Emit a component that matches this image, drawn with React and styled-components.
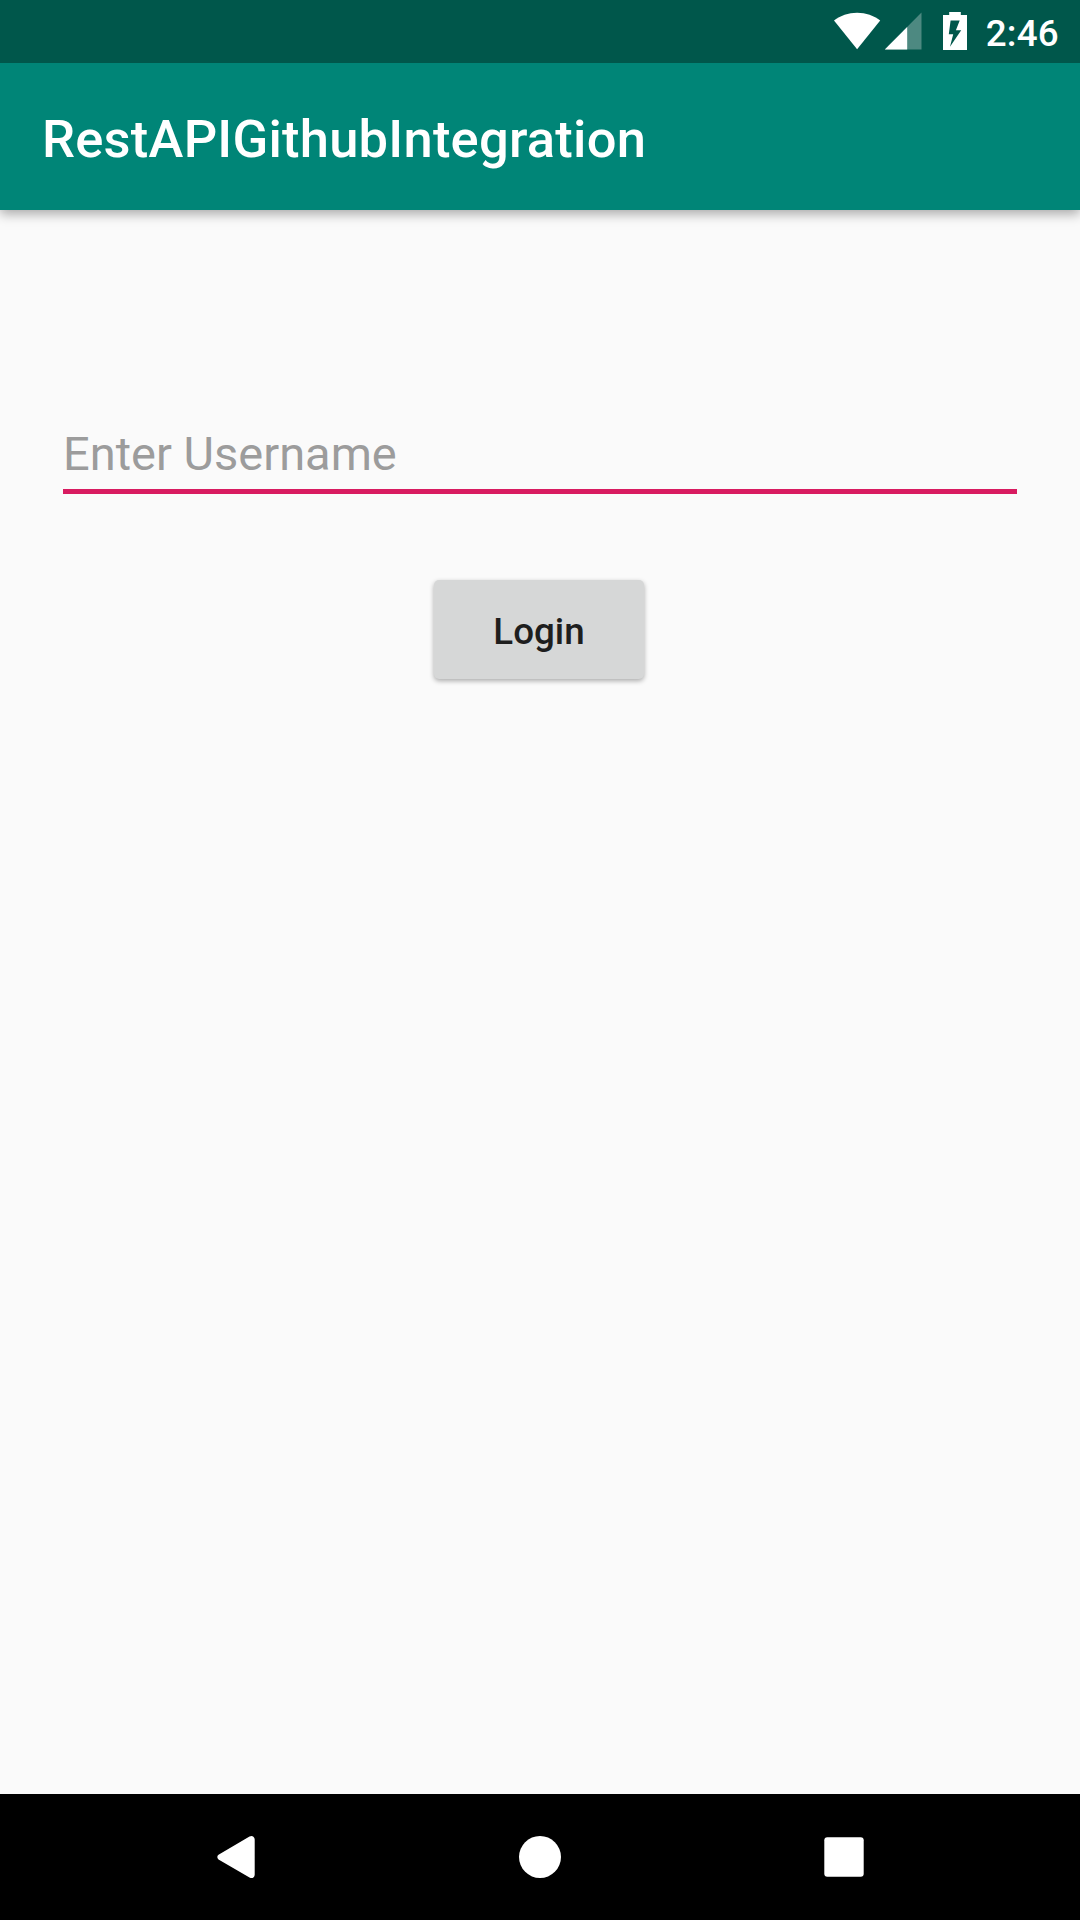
import React from "react";
import styled, { createGlobalStyle } from "styled-components";

const GlobalStyle = createGlobalStyle`
  * { box-sizing: border-box; }
  body {
    margin: 0;
    background: #fafafa;
    font-family: Roboto, "Liberation Sans", sans-serif;
  }
`;

const Screen = styled.div`
  display: flex;
  flex-direction: column;
  width: 1080px;
  height: 1920px;
  overflow: hidden;
  background: #fafafa;
`;

const StatusBar = styled.header`
  flex: none;
  display: flex;
  justify-content: flex-end;
  align-items: flex-start;
  z-index: 1;
  height: 63px;
  padding: 12px 21px 0 0;
  background: #00574b;
  color: #fff;
`;

const StatusIcon = styled.svg`
  display: block;
  flex: none;
  width: ${(p) => p.$width}px;
  height: 38px;
  margin-right: ${(p) => p.$gap}px;
`;

const Clock = styled.time`
  font-size: 36.75px;
  font-weight: 500;
  line-height: 43px;
  letter-spacing: 0.25px;
`;

const AppBar = styled.div`
  flex: none;
  display: flex;
  align-items: center;
  height: 147px;
  padding: 4px 42px 0;
  background: #008577;
  box-shadow: 0 4px 11px rgba(0, 0, 0, 0.33);
`;

const Title = styled.h1`
  margin: 0;
  color: #fff;
  font-size: 52.5px;
  font-weight: 500;
  line-height: 62px;
  letter-spacing: 0.23px;
`;

const Content = styled.main`
  flex: 1;
  display: flex;
  flex-direction: column;
  align-items: center;
  padding: 212px 63px 0;
`;

const Field = styled.div`
  width: 100%;
  height: 72px;
  border-bottom: 5px solid #d81b60;
  color: #9c9c9c;
  font-size: 47px;
  line-height: 64px;
`;

const Button = styled.button`
  width: 210px;
  height: 99px;
  margin: 86px 2px 0 0;
  padding: 4px 0 0;
  border: 0;
  border-radius: 5px;
  background: #d6d7d7;
  box-shadow: 0 2px 5px rgba(0, 0, 0, 0.32);
  color: #1e1e1e;
  font: 500 36.75px Roboto, "Liberation Sans", sans-serif;
`;

const NavBar = styled.nav`
  flex: none;
  display: flex;
  justify-content: center;
  align-items: center;
  gap: 262px;
  height: 126px;
  background: #000;
`;

const NavIcon = styled.svg`
  display: block;
  width: 42px;
  height: 42px;
  fill: #fff;
  overflow: visible;
`;

export default function App() {
  return (
    <Screen>
      <GlobalStyle />
      <StatusBar>
        <StatusIcon $width={47} $gap={3} viewBox="0 0 47 38">
          <path d="M0 8.5C6.3 3.5 14.3.7 23.1.7s16.8 2.8 23.1 7.8L23.1 37.3Z" fill="#fff" />
        </StatusIcon>
        <StatusIcon $width={38} $gap={21} viewBox="0 0 38 38">
          <path d="M37.5.5V37.5H.8Z" fill="#fff" fillOpacity=".3" />
          <path d="M23.2 14.9V37.5H.8Z" fill="#fff" />
        </StatusIcon>
        <StatusIcon $width={24} $gap={19} viewBox="0 0 24 38">
          <path
            fillRule="evenodd"
            d="M6.2 0H17.8V3H24V38H0V3H6.2ZM7.6 8.6L5.8 22.3H10.2L7 34.8L18.2 18.2H12.9L16.7 8.6Z"
            fill="#fff"
          />
        </StatusIcon>
        <Clock>2:46</Clock>
      </StatusBar>
      <AppBar>
        <Title>RestAPIGithubIntegration</Title>
      </AppBar>
      <Content>
        <Field>Enter Username</Field>
        <Button type="button">Login</Button>
      </Content>
      <NavBar>
        <NavIcon viewBox="0 0 42 42">
          <path d="M3.5 18.7L34.5.6Q36.8-.7 38.4.7Q39.7 1.8 39.7 3.5V38.7Q39.7 40.4 38.4 41.4Q36.8 42.7 34.5 41.4L3.5 23.5Q2.3 22.6 2.3 21.1Q2.3 19.6 3.5 18.7Z" />
        </NavIcon>
        <NavIcon viewBox="0 0 42 42">
          <circle cx="21" cy="21" r="21" />
        </NavIcon>
        <NavIcon viewBox="0 0 42 42">
          <rect x="1.3" y="1.3" width="39.4" height="39.4" rx="3" />
        </NavIcon>
      </NavBar>
    </Screen>
  );
}
